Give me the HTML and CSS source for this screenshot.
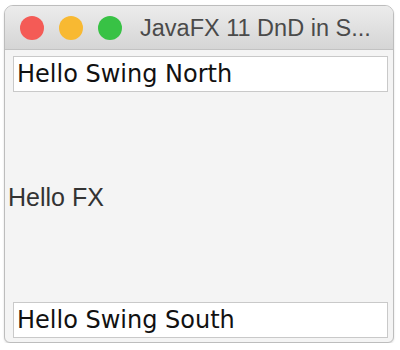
FILE: index.html
```html
<!DOCTYPE html>
<html lang="en">
<head>
    <meta charset="UTF-8">
    <title>JavaFX 11 DnD in Swing</title>
    <link rel="stylesheet" href="styles.css">
</head>
<body>
    <div class="window">
        <div class="titlebar">
            <div class="lights">
                <span class="light red"></span>
                <span class="light yellow"></span>
                <span class="light green"></span>
            </div>
            <div class="title">JavaFX 11 DnD in S...</div>
        </div>
        <div class="content">
            <div class="field">Hello Swing North</div>
            <div class="center">Hello FX</div>
            <div class="field">Hello Swing South</div>
        </div>
    </div>
</body>
</html>
```

FILE: styles.css
```css
body {
    margin: 0;
    padding: 0;
    background-color: #ffffff;
}
.window {
    margin: 5px 0 0 4px;
    width: 388px;
    height: 336px;
    border: 1px solid #bdbdbd;
    border-radius: 9px 9px 6px 6px;
    overflow: hidden;
    display: flex;
    flex-direction: column;
    background-color: #f4f4f4;
    box-shadow: 0 1px 2px rgba(0, 0, 0, 0.15);
}
.titlebar {
    height: 43px;
    display: flex;
    align-items: center;
    background: linear-gradient(#ececec, #d5d5d5);
    border-bottom: 1px solid #c2c2c2;
}
.lights {
    display: flex;
    gap: 15px;
    margin-left: 15px;
}
.light {
    width: 24px;
    height: 24px;
    border-radius: 50%;
}
.red {
    background-color: #f45b56;
}
.yellow {
    background-color: #f8b932;
}
.green {
    background-color: #38c245;
}
.title {
    margin-left: 18px;
    padding-top: 1px;
    font-family: 'Liberation Sans', Arial, sans-serif;
    font-size: 23.5px;
    color: #4a4a4a;
}
.content {
    flex: 1;
    display: flex;
    flex-direction: column;
    padding: 6px 5px 4px 8px;
}
.field {
    height: 34px;
    line-height: 34px;
    background-color: #ffffff;
    border: 1px solid #c9c9c9;
    padding-left: 3px;
    font-family: 'DejaVu Sans', sans-serif;
    font-size: 24px;
    color: #111;
}
.center {
    flex: 1;
    display: flex;
    align-items: center;
    margin-left: -5px;
    font-family: 'Liberation Sans', Arial, sans-serif;
    font-size: 25px;
    color: #333;
}
```
